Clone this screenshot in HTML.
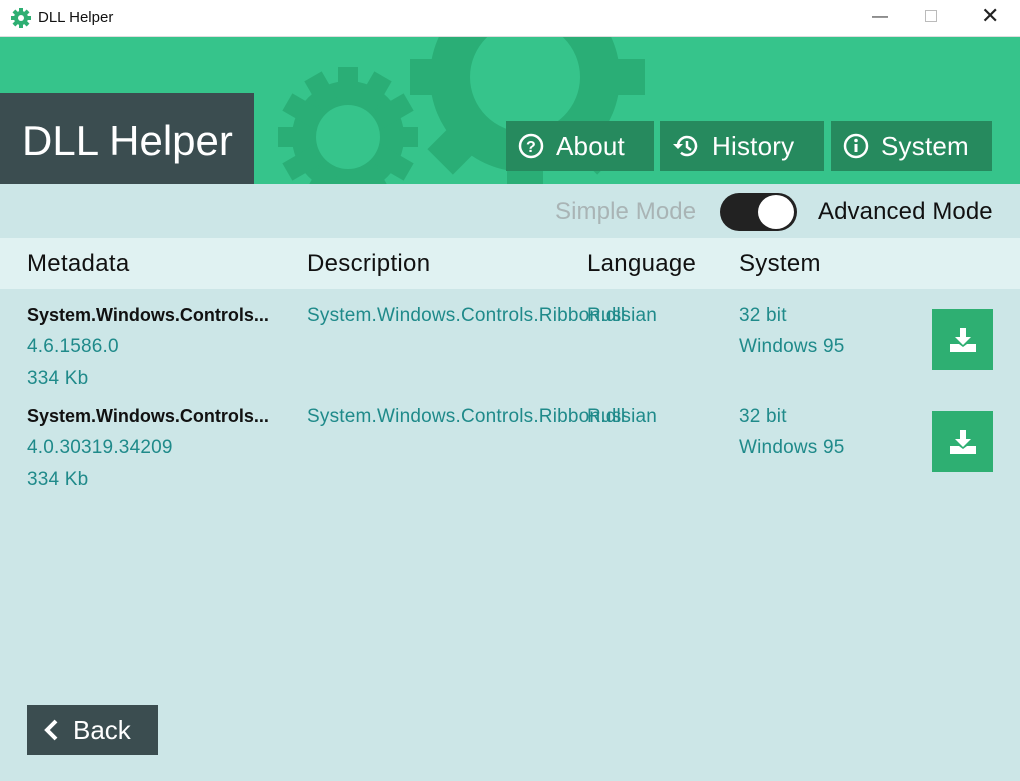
<!DOCTYPE html>
<html><head><meta charset="utf-8"><style>
*{margin:0;padding:0;box-sizing:border-box}
body{width:1020px;height:781px;overflow:hidden;background:#cce6e7;font-family:"Liberation Sans",sans-serif;position:relative}
.abs{position:absolute}
.tb{left:0;top:0;width:1020px;height:37px;background:#fff;border-bottom:1px solid #ddd}
.tb .t{left:38px;top:9px;font-size:15px;color:#111}
.hdr{left:0;top:37px;width:1020px;height:147px;background:#36c48b;overflow:hidden}
.title{left:0;top:93px;width:254px;height:91px;background:#3b4d50;color:#fff;font-size:42px;padding:24px 0 0 22px}
.btn{top:121px;height:50px;background:#268a5e;color:#fff;font-size:26px;letter-spacing:0.2px;display:flex;align-items:center;padding-left:12px;gap:12px}
.mode{top:198px;font-size:24px;letter-spacing:0.1px}
.th{left:0;top:238px;width:1020px;height:51px;background:#e0f2f2}
.th span{position:absolute;top:12px;font-size:24px;letter-spacing:0.3px;color:#111}
.c{position:absolute;font-size:19px;color:#1f8a8a;letter-spacing:0.2px}
.k{color:#111;font-weight:bold;font-size:18px;letter-spacing:0}
.dl{left:932px;width:61px;height:61px;background:#2eaf72;display:flex;align-items:center;justify-content:center}
.back{left:27px;top:705px;width:131px;height:50px;background:#3b4d50;color:#fff;font-size:26px;display:flex;align-items:center;padding-left:16px;gap:14px}
</style></head><body>
<div class="abs tb">
<svg class="abs" style="left:11px;top:8px" width="20" height="20" viewBox="0 0 20 20"><g fill="#2eaf72"><circle cx="10" cy="10" r="7"/><rect x="8" y="0" width="4" height="20"/><rect x="0" y="8" width="20" height="4"/><rect x="8" y="0" width="4" height="20" transform="rotate(45 10 10)"/><rect x="8" y="0" width="4" height="20" transform="rotate(-45 10 10)"/></g><circle cx="10" cy="10" r="3" fill="#fff"/></svg>
<div class="abs t">DLL Helper</div>
<div class="abs" style="left:872px;top:8px;font-size:16px;color:#333">—</div>
<div class="abs" style="left:925px;top:10px;width:12px;height:12px;border:1px solid #bbb"></div>
<div class="abs" style="left:981px;top:3px;font-size:22px;color:#222">✕</div>
</div>
<div class="abs hdr">
<svg class="abs" style="left:270px;top:20px" width="160" height="140" viewBox="0 0 160 140"><g fill="#2aae76"><circle cx="78" cy="80" r="56"/><g><rect x="68" y="10" width="20" height="140" /><rect x="8" y="70" width="140" height="20"/><rect x="68" y="10" width="20" height="140" transform="rotate(30 78 80)"/><rect x="68" y="10" width="20" height="140" transform="rotate(60 78 80)"/><rect x="68" y="10" width="20" height="140" transform="rotate(-30 78 80)"/><rect x="68" y="10" width="20" height="140" transform="rotate(-60 78 80)"/></g></g><circle cx="78" cy="80" r="32" fill="#36c48b"/></svg>
<svg class="abs" style="left:410px;top:-40px" width="240" height="200" viewBox="0 0 240 200"><g fill="#2aae76"><circle cx="115" cy="80" r="95"/><rect x="97" y="-40" width="36" height="240"/><rect x="-5" y="62" width="240" height="36"/><rect x="97" y="-40" width="36" height="240" transform="rotate(45 115 80)"/><rect x="97" y="-40" width="36" height="240" transform="rotate(-45 115 80)"/></g><circle cx="115" cy="80" r="55" fill="#36c48b"/></svg>
</div>
<div class="abs title">DLL Helper</div>
<div class="abs btn" style="left:506px;width:148px"><svg width="26" height="26" viewBox="0 0 26 26"><circle cx="13" cy="13" r="11" fill="none" stroke="#fff" stroke-width="2.5"/><text x="13" y="19" font-size="16" font-weight="bold" fill="#fff" text-anchor="middle" font-family="Liberation Sans">?</text></svg>About</div>
<div class="abs btn" style="left:660px;width:164px"><svg width="28" height="26" viewBox="0 0 28 26"><path d="M6 13a9 9 0 1 1 3 6.7" fill="none" stroke="#fff" stroke-width="2.5"/><path d="M1 11l5 5 5-5z" fill="#fff"/><path d="M15 8v6l4 3" fill="none" stroke="#fff" stroke-width="2.5"/></svg>History</div>
<div class="abs btn" style="left:831px;width:161px"><svg width="26" height="26" viewBox="0 0 26 26"><circle cx="13" cy="13" r="11" fill="none" stroke="#fff" stroke-width="2.5"/><rect x="11.5" y="11" width="3" height="8" fill="#fff"/><circle cx="13" cy="7.5" r="1.8" fill="#fff"/></svg>System</div>
<div class="abs mode" style="left:555px;color:#a9b4b5">Simple Mode</div>
<div class="abs" style="left:720px;top:193px;width:77px;height:38px;border-radius:19px;background:#222"></div>
<div class="abs" style="left:758px;top:195px;width:36px;height:34px;border-radius:50%;background:#fff"></div>
<div class="abs mode" style="left:818px;color:#111">Advanced Mode</div>
<div class="abs th"><span style="left:27px">Metadata</span><span style="left:307px">Description</span><span style="left:587px">Language</span><span style="left:739px">System</span></div>

<div class="c k" style="left:27px;top:305px">System.Windows.Controls...</div>
<div class="c" style="left:27px;top:336px">4.6.1586.0</div>
<div class="c" style="left:27px;top:368px">334 Kb</div>
<div class="c" style="left:307px;top:305px">System.Windows.Controls.Ribbon.dll</div>
<div class="c" style="left:587px;top:305px">Russian</div>
<div class="c" style="left:739px;top:305px">32 bit</div>
<div class="c" style="left:739px;top:336px">Windows 95</div>
<div class="abs dl" style="top:309px"><svg width="30" height="28" viewBox="0 0 30 28"><path d="M12 2h6v9h5l-8 8-8-8h5z" fill="#fff"/><path d="M2 18h9l4 3 4-3h9v8H2z" fill="#fff"/></svg></div>

<div class="c k" style="left:27px;top:406px">System.Windows.Controls...</div>
<div class="c" style="left:27px;top:437px">4.0.30319.34209</div>
<div class="c" style="left:27px;top:469px">334 Kb</div>
<div class="c" style="left:307px;top:406px">System.Windows.Controls.Ribbon.dll</div>
<div class="c" style="left:587px;top:406px">Russian</div>
<div class="c" style="left:739px;top:406px">32 bit</div>
<div class="c" style="left:739px;top:437px">Windows 95</div>
<div class="abs dl" style="top:411px"><svg width="30" height="28" viewBox="0 0 30 28"><path d="M12 2h6v9h5l-8 8-8-8h5z" fill="#fff"/><path d="M2 18h9l4 3 4-3h9v8H2z" fill="#fff"/></svg></div>

<div class="abs back"><svg width="16" height="22" viewBox="0 0 16 22"><path d="M13 2L4 11l9 9" fill="none" stroke="#fff" stroke-width="4"/></svg>Back</div>
</body></html>
